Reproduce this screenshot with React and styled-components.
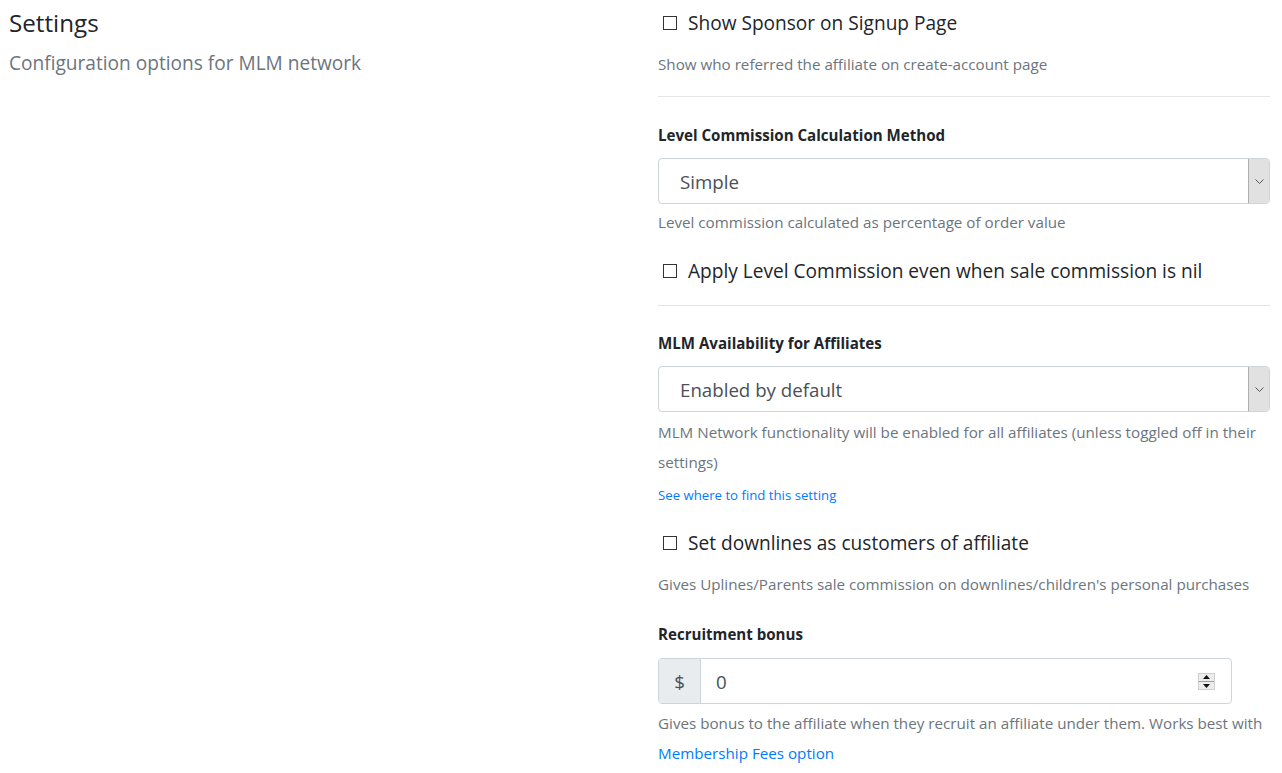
import React from "react";
import styled, { createGlobalStyle } from "styled-components";

const Global = createGlobalStyle`
  html, body { margin: 0; padding: 0; background: #fff; }
  body { font-family: "Open Sans", "Noto Sans", sans-serif; color: #212529; }
  * { box-sizing: border-box; }
`;

const Page = styled.div`
  display: grid;
  grid-template-columns: 649px 612px;
  padding: 8px 12px 0 9px;
`;

const Side = styled.div`
  display: flex;
  flex-direction: column;
`;

const Title = styled.h1`
  margin: 0;
  font-size: 24.2px;
  font-weight: 400;
  line-height: 30px;
  color: #212529;
`;

const Subtitle = styled.p`
  margin: 10px 0 0;
  font-size: 19.1px;
  line-height: 30px;
  color: #6c757d;
`;

const Main = styled.div`
  display: flex;
  flex-direction: column;
`;

const CheckRow = styled.label`
  display: flex;
  align-items: center;
  gap: 11px;
  padding-left: 5px;
  margin-top: ${(p) => p.$mt || 0}px;
  font-size: 19.1px;
  line-height: 30px;
  color: #212529;
`;

const Box = styled.span`
  width: 14px;
  height: 14px;
  border: 1px solid #333;
  background: #fff;
  flex: none;
`;

const Help = styled.p`
  margin: ${(p) => p.$mt || 0}px 0 0;
  font-size: 15.2px;
  line-height: ${(p) => p.$lh || 30}px;
  color: #6c757d;
`;

const Link = styled.a`
  color: #007bff;
  text-decoration: none;
`;

const SmallLink = styled.a`
  display: block;
  margin-top: 8px;
  font-size: 13.2px;
  line-height: 20px;
  color: #007bff;
  text-decoration: none;
`;

const Rule = styled.hr`
  margin: ${(p) => p.$mt}px 0 0;
  border: 0;
  border-top: 1px solid #e5e5e5;
  height: 0;
`;

const Label = styled.div`
  margin-top: ${(p) => p.$mt}px;
  font-size: 15.1px;
  font-weight: 700;
  line-height: 22px;
  color: #212529;
`;

const Select = styled.div`
  margin-top: ${(p) => p.$mt || 12}px;
  height: 46px;
  display: flex;
  align-items: stretch;
  border: 1px solid #ced4da;
  border-radius: 4px;
  overflow: hidden;
`;

const SelectValue = styled.div`
  flex: 1;
  display: flex;
  align-items: center;
  padding-left: 21px;
  font-size: 18.7px;
  color: #495057;
`;

const Arrow = styled.div`
  width: 21px;
  background: #e1e1e1;
  border-left: 1px solid #adadad;
  display: flex;
  align-items: center;
  justify-content: center;
`;

const InputGroup = styled.div`
  margin-top: 13px;
  width: 574px;
  height: 46px;
  display: flex;
  border: 1px solid #ced4da;
  border-radius: 4px;
  overflow: hidden;
`;

const Prepend = styled.div`
  width: 42px;
  background: #e9ecef;
  border-right: 1px solid #ced4da;
  display: flex;
  align-items: center;
  justify-content: center;
  font-size: 18.7px;
  color: #495057;
`;

const InputValue = styled.div`
  flex: 1;
  display: flex;
  align-items: center;
  justify-content: space-between;
  padding: 0 16px 0 15px;
  font-size: 18.7px;
  color: #495057;
`;

const Spinner = styled.div`
  width: 17px;
  height: 17px;
  background: #ececec;
  border: 1px solid #cfcfcf;
  display: flex;
  flex-direction: column;
  align-items: center;
  justify-content: space-around;
`;

const SpinSep = styled.span`
  width: 100%;
  height: 1px;
  background: #9e9e9e;
`;

const Chevron = () => (
  <svg width="9" height="5" viewBox="0 0 9 5">
    <path d="M0.5 0.5 L4.5 4.5 L8.5 0.5" fill="none" stroke="#555" strokeWidth="1" />
  </svg>
);

const Tri = ({ up }) => (
  <svg width="7" height="4" viewBox="0 0 7 4">
    <path d={up ? "M0 4 L3.5 0 L7 4 Z" : "M0 0 L3.5 4 L7 0 Z"} fill="#111" />
  </svg>
);

export default function App() {
  return (
    <>
      <Global />
      <Page>
        <Side>
          <Title>Settings</Title>
          <Subtitle>Configuration options for MLM network</Subtitle>
        </Side>
        <Main>
          <CheckRow>
            <Box />
            Show Sponsor on Signup Page
          </CheckRow>
          <Help $mt={11}>Show who referred the affiliate on create-account page</Help>
          <Rule $mt={17} />
          <Label $mt={27}>Level Commission Calculation Method</Label>
          <Select>
            <SelectValue>Simple</SelectValue>
            <Arrow><Chevron /></Arrow>
          </Select>
          <Help $mt={6} $lh={24}>Level commission calculated as percentage of order value</Help>
          <CheckRow $mt={22}>
            <Box />
            Apply Level Commission even when sale commission is nil
          </CheckRow>
          <Rule $mt={19} />
          <Label $mt={26}>MLM Availability for Affiliates</Label>
          <Select $mt={12}>
            <SelectValue>Enabled by default</SelectValue>
            <Arrow><Chevron /></Arrow>
          </Select>
          <Help $mt={5}>
            MLM Network functionality will be enabled for all affiliates (unless toggled off in their settings)
          </Help>
          <SmallLink href="#">See where to find this setting</SmallLink>
          <CheckRow $mt={23}>
            <Box />
            Set downlines as customers of affiliate
          </CheckRow>
          <Help $mt={11}>Gives Uplines/Parents sale commission on downlines/children's personal purchases</Help>
          <Label $mt={24}>Recruitment bonus</Label>
          <InputGroup>
            <Prepend>$</Prepend>
            <InputValue>
              0
              <Spinner>
                <Tri up />
                <SpinSep />
                <Tri />
              </Spinner>
            </InputValue>
          </InputGroup>
          <Help $mt={4}>
            Gives bonus to the affiliate when they recruit an affiliate under them. Works best with{" "}
            <Link href="#">Membership Fees option</Link>
          </Help>
        </Main>
      </Page>
    </>
  );
}
